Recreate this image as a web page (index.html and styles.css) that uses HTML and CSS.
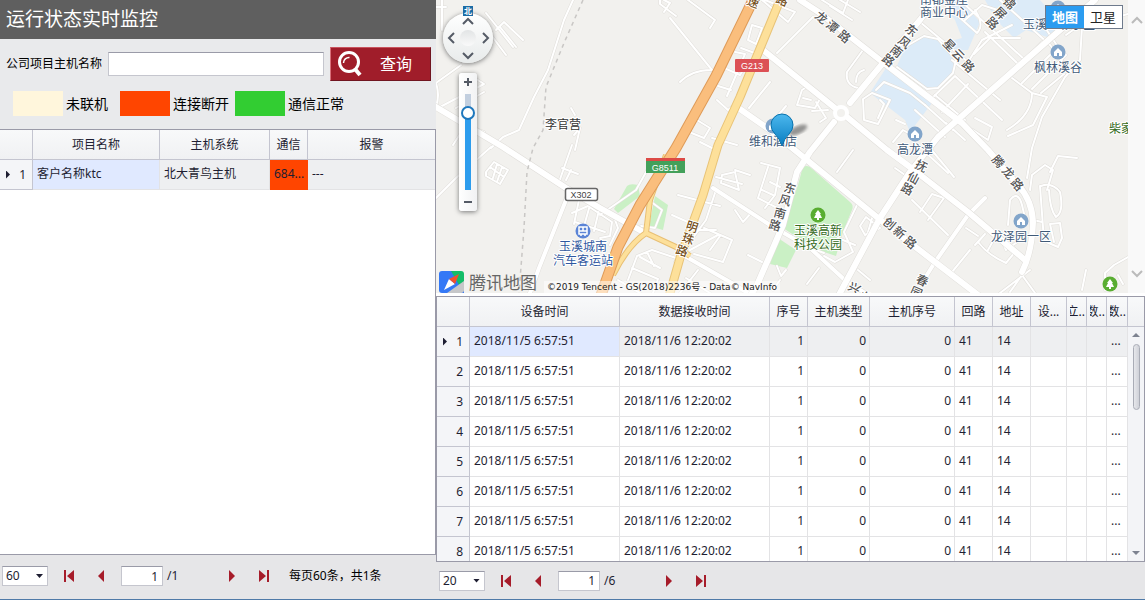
FILE: index.html
```html
<!DOCTYPE html>
<html lang="zh-CN">
<head>
<meta charset="utf-8">
<meta name="viewport" content="width=device-width, initial-scale=1">
<title>运行状态实时监控</title>
<link rel="stylesheet" href="styles.css">
</head>
<body>
<svg class="defs" aria-hidden="true">
  <defs>
    <symbol id="first" viewBox="0 0 12 14"><path d="M1 1h2v12H1zM11 1v12L4 7z" fill="#a61c2a"/></symbol>
    <symbol id="prev" viewBox="0 0 12 14"><path d="M9 1v12L3 7z" fill="#a61c2a"/></symbol>
    <symbol id="next" viewBox="0 0 12 14"><path d="M3 1v12l6-6z" fill="#a61c2a"/></symbol>
    <symbol id="last" viewBox="0 0 12 14"><path d="M9 1h2v12H9zM1 1v12l7-6z" fill="#a61c2a"/></symbol>
  </defs>
</svg>
<main class="app">
  <section class="side">
    <h1 class="title">运行状态实时监控</h1>
    <form class="search">
      <label for="host">公司项目主机名称</label>
      <input id="host" class="field" type="text">
      <button class="query" type="button">
        <svg width="24" height="26" viewBox="0 0 24 26" fill="none" stroke="#fff" aria-hidden="true">
          <circle cx="11" cy="11" r="9.500" stroke-width="3"/>
          <path d="M17 18l5 6" stroke-width="4"/>
          <path d="M5.500 12a5.500 5.500 0 0 1 6-5.500" stroke-width="1.500"/>
        </svg>
        <span>查询</span>
      </button>
    </form>
    <ul class="legend">
      <li><i class="swatch offline"></i>未联机</li>
      <li><i class="swatch broken"></i>连接断开</li>
      <li><i class="swatch normal"></i>通信正常</li>
    </ul>
    <div class="grid hosts">
      <table>
        <colgroup><col class="w33"><col class="w127"><col class="w110"><col class="w38"><col></colgroup>
        <thead><tr><th></th><th>项目名称</th><th>主机系统</th><th>通信</th><th>报警</th></tr></thead>
        <tbody><tr class="current"><th><i class="marker"></i>1</th><td class="focus">客户名称ktc</td><td>北大青鸟主机</td><td class="alarm">684...</td><td>---</td></tr></tbody>
      </table>
    </div>
    <nav class="pager pager-side" aria-label="主机分页">
      <span class="pick"><select aria-label="每页条数"><option>60</option></select></span>
      <button class="step" type="button" aria-label="首页"><svg width="12" height="14"><use href="#first"/></svg></button>
      <button class="step" type="button" aria-label="上一页"><svg width="12" height="14"><use href="#prev"/></svg></button>
      <input class="page" type="text" value="1" aria-label="页码">
      <span class="total">/1</span>
      <button class="step" type="button" aria-label="下一页"><svg width="12" height="14"><use href="#next"/></svg></button>
      <button class="step" type="button" aria-label="末页"><svg width="12" height="14"><use href="#last"/></svg></button>
      <span class="summary">每页60条，共1条</span>
    </nav>
  </section>

  <section class="main">
    <div class="map-row">
      <div class="map">
        <svg class="canvas" viewBox="436 0 692 293" preserveAspectRatio="xMinYMin slice" role="img" aria-label="玉溪地图">
          <defs>
            <g id="minor" fill="none" stroke-linejoin="round" stroke-linecap="round">
              <path d="M436 83L461 65M442 0V30M436 7H446M486 13L513 47M482 23L506 55M496 30L504 22L523 40M500 27L516 47"/>
              <path d="M436 83Q440 95 436 107M440 107L484 84M456 108L484 92M470 75L484 84M453 145L466 125L484 132"/>
              <path d="M486 172L494 162L508 170L500 184L486 176ZM490 167L504 177M497 164L493 178M502 167L497 182"/>
              <path d="M436 198L456 178L491 147M573 0L564 20L548 70L534 97L519 130L503 137L491 148"/>
              <path d="M571 108L575 115M575 150L580 128L574 135M580 128L572 122M558 185L572 145M562 168L578 174M566 180L571 170"/>
              <path d="M660 0V4L676 16M664 0L670 3L664 12"/>
              <path d="M572 213L588 206L612 222L610 236L600 238M575 222L605 232M580 195L574 224M592 198L584 226M600 206L594 231M614 217L618 228L610 245"/>
              <path d="M670 18L712 70M680 82Q692 70 711 70M688 0L715 20L710 28M765 0L795 12L788 22L762 0M752 25L762 28L756 44L748 40ZM741 48L760 55M735 52L745 54L727 96M718 86L731 90M724 68L740 75M740 75L748 62M717 100L728 110L738 102"/>
              <path d="M692 117L710 128L704 138L689 132ZM700 142L712 148M712 138L737 145M770 82L749 108M786 106L776 118"/>
              <path d="M822 0L843 13L848 0M830 6L852 20M840 0L860 12M800 0L820 13M813 17L777 53"/>
              <path d="M808 86L821 97L815 108L797 105L802 90ZM803 98L811 100M812 111L828 110M816 102L826 118L820 122M863 50L847 72Q845 85 858 88M864 70Q856 72 856 82"/>
              <path d="M863 99L872 93L890 100L878 124L864 120ZM880 100L884 104L878 118M893 142L903 130L910 134M896 120L905 124"/>
              <path d="M920 22L968 62L982 40L1012 25M930 100L955 76L1002 120M942 112L968 84M952 60L1000 100M960 0L1025 60L1042 42M985 32L1018 64M965 20L982 5L1004 12M940 0L977 33Q985 25 975 10M1000 0L1050 45L1062 60M974 54L990 38L1020 38"/>
              <path d="M905 47L924 36L938 39L956 60L953 73L938 88L927 89L897 67M876 90L884 82L910 93L925 105"/>
              <path d="M1012 78L1032 93L1047 97L1033 125L1008 136M1032 93Q1032 115 1007 130M1022 83L1050 55M1032 89L1066 55M1041 93L1064 74M1082 27L1080 60L1065 77L1042 117L1032 148L1027 178M1066 35L1090 18M1040 20L1060 50M1082 27L1128 14"/>
              <path d="M915 110L945 137M925 105L953 130M935 95L965 120M946 123L965 140M975 118L992 127L988 140L973 130"/>
              <path d="M912 200L948 235M920 212L932 194L944 198L928 220M930 148L954 177M925 152L948 173M895 168L915 182"/>
              <path d="M1030 190L1032 175L1045 165L1053 170M1050 172L1058 156L1077 158M1053 170L1047 190M1040 186L1044 241L1058 247L1062 238L1060 223L1050 224L1054 242M1041 186Q1052 182 1060 192Q1064 212 1056 217Q1050 210 1049 190M1033 220L1042 222"/>
              <path d="M975 245L985 234L978 242Q988 255 1006 263L1015 252M998 232L1006 250L1020 240M988 250L998 232M952 272L970 250M1008 225L1010 200Q1018 190 1022 205L1025 218M966 228L978 236"/>
              <path d="M1010 292L1022 275L1035 293M1082 290L1086 270M1105 290V273L1114 265L1128 257M1118 275L1123 284M1000 293L1030 270"/>
              <path d="M761 163L780 168L775 195L765 208M768 167L758 198L785 212M770 182L780 187M762 190L773 195M722 175L735 172L739 190L721 183ZM735 170L750 175M716 177L742 184M678 195L720 206M716 190L706 220L675 262M693 220L698 230L716 230M704 228L732 240L723 262L694 254M690 250L718 235M710 250L720 236M748 255L762 262M672 215L690 223L682 240"/>
              <path d="M628 280L637 256L652 250L676 258M632 268L658 279L653 293M640 257L660 268M647 252L654 266M618 280L640 293M686 278L710 293M698 270L680 293M735 210L743 222L752 212M777 266L781 276L786 270M780 280L773 290M807 284L819 268"/>
              <path d="M858 203L844 232L853 252L835 262L824 256M866 217L880 228L865 235L860 226ZM873 215L868 232M838 238L855 245M837 172L853 150M824 253L810 248M858 270L870 280"/>
              <path d="M600 215L636 190L650 165M646 198L662 210L655 228L641 226"/>
            </g>
            <g id="major" fill="none" stroke-linejoin="round" stroke-linecap="round">
              <path d="M436 107L503 147L566 188L600 208L645 233"/>
              <path d="M763 50L835 108M847 117L887 150L910 167L968 212L1025 260"/>
              <path d="M935 0L920 20L883 63L850 103M834 122L810 152L797 172L783 225L757 285L752 293"/>
              <path d="M800 0L820 13L880 60L910 83L962 123L988 150L1018 185Q1032 200 1033 222Q1032 252 1022 272"/>
              <path d="M1095 0L1052 37L938 137L910 172L880 218L840 293"/>
              <path d="M737 107L770 130L807 160L883 222L935 262L978 295"/>
            </g>
            <g id="medium" fill="none" stroke-linejoin="round" stroke-linecap="round">
              <path d="M568 195L539 268L530 293M713 188L770 225L810 248L847 282L865 293M683 255L730 282L748 293M925 278L935 262L968 215L985 198"/>
            </g>
            <linearGradient id="pinfill" x1="0" y1="0" x2="0" y2="1"><stop offset="0" stop-color="#4cb8ee"/><stop offset="1" stop-color="#087cc0"/></linearGradient>
            <filter id="haze"><feGaussianBlur stdDeviation="1.500"/></filter>
            <g id="house"><circle r="7.500" fill="#82a5ca"/><path d="M-4 0L0-4L4 0V4H1V1H-1V4H-4Z" fill="#fff"/></g>
            <g id="tree"><circle r="7.500" fill="#59ad31"/><path d="M0-5L3-1H2L4 3H1V5H-1V3H-4L-2-1H-3Z" fill="#fff"/></g>
          </defs>
          <rect x="436" width="692" height="293" fill="#f2f1ee"/>
          <g fill="#dcebf8">
            <path d="M905 48L924 37L938 40L955 60L953 72L938 87L927 88L896 68Z"/>
            <path d="M870 93L886 68L912 85L932 103L910 132L905 120Z"/>
            <path d="M940 0H960L980 22L968 50L955 50L948 42L962 38L955 20Z"/>
            <path d="M985 0H1040L1062 25L1050 38L1026 30L1014 38L996 20Z"/>
          </g>
          <g fill="#caf0c5">
            <path d="M802 170Q804 164 810 167L850 202Q854 205 852 210L843 232L836 256L815 249L783 228L798 185Z"/>
            <path d="M778 238L796 250L787 268L770 264Z"/>
            <path d="M627 186Q630 183 638 185L640 196L618 213L614 209Z"/>
            <path d="M655 196L668 205L663 230L649 226Z"/>
          </g>
          <use href="#minor" stroke="#e0deda" stroke-width="3"/><use href="#minor" stroke="#fff" stroke-width="2"/>
          <use href="#medium" stroke="#e0deda" stroke-width="5"/><use href="#medium" stroke="#fff" stroke-width="4"/>
          <use href="#major" stroke="#e0deda" stroke-width="7"/><use href="#major" stroke="#fff" stroke-width="6"/>
          <circle cx="841" cy="113" r="6" fill="#f2f1ee" stroke="#fff" stroke-width="4"/>
          <path d="M583 0L564 43L546 87L543 130L533 148L527 172L524 228L519 293" fill="none" stroke="#c9c7c5" stroke-width="1.500" stroke-dasharray="4 4"/>
          <g fill="none" stroke-linejoin="round">
            <path d="M666 155L650 200L646 233L676 247L690 256M646 233Q628 245 613 275" stroke="#e8bf74" stroke-width="6"/>
            <path d="M666 155L650 200L646 233L676 247L690 256M646 233Q628 245 613 275" stroke="#fde09a" stroke-width="4"/>
            <path d="M780 0L740 97L718 145L703 195L680 258L668 300" stroke="#e8c377" stroke-width="9"/>
            <path d="M780 0L740 97L718 145L703 195L680 258L668 300" stroke="#fde09a" stroke-width="7"/>
            <path d="M754 -2L716 76L676 148L640 205L618 247L600 298" stroke="#df9b58" stroke-width="11"/>
            <path d="M754 -2L716 76L676 148L640 205L618 247L600 298" stroke="#fabe7d" stroke-width="9"/>
          </g>
          <rect x="735" y="59" width="34" height="13" rx="1" fill="#dc5055"/><text class="shield" x="752" y="69">G213</text>
          <rect x="646" y="158" width="39" height="3" fill="#dc4a45"/><rect x="646" y="161" width="39" height="12" fill="#43a05a"/><text class="shield" x="665" y="171">G8511</text>
          <rect x="565.500" y="188.500" width="32" height="12" rx="2" fill="#fff" stroke="#666" stroke-width="1.500"/><text class="shield dark" x="581" y="198">X302</text>
          <g class="label">
            <text x="563" y="129" fill="#333">李官营</text>
            <text x="773" y="146">维和酒店</text>
            <text x="915" y="154">高龙潭</text>
            <text x="944" y="4">南都金座</text><text x="944" y="17">商业中心</text>
            <text x="1058" y="72">枫林溪谷</text>
            <text x="1059" y="29">玉溪五彩小区</text>
            <text x="1021" y="241">龙泽园一区</text>
            <text x="583" y="251" fill="#3058a0">玉溪城南</text><text x="583" y="265" fill="#3058a0">汽车客运站</text>
            <text x="818" y="235" fill="#346b22">玉溪高新</text><text x="818" y="249" fill="#346b22">科技公园</text>
            <text x="1127" y="133" fill="#346b22">柴家村</text>
          </g>
          <g class="road">
            <text x="814 825 837" y="17 26 36" rotate="40">龙潭路</text>
            <text x="783 778 773 768" y="191 203 216 228" rotate="15">东风南路</text>
            <text x="685 681 675" y="229 241 253" rotate="18" fill="#765122">明珠路</text>
            <text x="882 892 903" y="223 232 242" rotate="40">创新路</text>
            <text x="991 1001 1010" y="160 171 183" rotate="48">腾龙路</text>
            <text x="914 906 900" y="167 179 190" rotate="28">抚仙路</text>
            <text x="904 897 889 881" y="30 42 51 60" rotate="38">东风南路</text>
            <text x="942 951 961" y="44 54 65" rotate="45">星云路</text>
            <text x="1002 993 985" y="2 12 22" rotate="45">锦屏路</text>
            <text x="915 909" y="282 294" rotate="24">春园</text>
            <text x="847 858" y="289 298" rotate="30">兴业</text>
            <text x="746 775" y="4 2" rotate="22" fill="#765122">速路</text>
          </g>
          <use href="#house" x="1058" y="52"/><use href="#house" x="1058" y="8"/><use href="#house" x="915" y="134"/><use href="#house" x="1021" y="221"/><use href="#house" x="773" y="126"/>
          <use href="#tree" x="818" y="215"/><use href="#tree" x="1110" y="284"/>
          <circle cx="583" cy="231" r="7.500" fill="#5b84d6"/><path d="M579 227h8v7h-8zM583 227v4M579 231h8M581 234v2M585 234v2" fill="none" stroke="#fff" stroke-width="1.500"/>
          <ellipse cx="798" cy="130" rx="10" ry="4" transform="rotate(-25 798 130)" fill="#555" opacity=".6" filter="url(#haze)"/>
          <path d="M782 146Q780 139 775 134Q771 130 771 125A11 11 0 0 1 793 125Q793 130 789 134Q784 139 782 146Z" fill="url(#pinfill)" stroke="#0872ad"/>
        </svg>

        <div class="controls">
          <span class="north">北</span>
          <div class="pan">
            <button class="up" type="button" aria-label="向上"><svg width="14" height="8" viewBox="0 0 14 8"><path d="M2 7L7 2L12 7"/></svg></button>
            <button class="left" type="button" aria-label="向左"><svg width="8" height="14" viewBox="0 0 8 14"><path d="M7 2L2 7L7 12"/></svg></button>
            <span class="hub"></span>
            <button class="right" type="button" aria-label="向右"><svg width="8" height="14" viewBox="0 0 8 14"><path d="M1 2L6 7L1 12"/></svg></button>
            <button class="down" type="button" aria-label="向下"><svg width="14" height="8" viewBox="0 0 14 8"><path d="M2 1L7 6L12 1"/></svg></button>
          </div>
          <div class="zoom">
            <button type="button" aria-label="放大"><svg width="10" height="10" viewBox="0 0 10 10"><path d="M1 5H9M5 1V9"/></svg></button>
            <input type="range" min="0" max="100" value="84" aria-label="缩放级别">
            <button type="button" aria-label="缩小"><svg width="10" height="10" viewBox="0 0 10 10"><path d="M1 5H9"/></svg></button>
          </div>
        </div>
        <div class="kinds"><button class="on" type="button">地图</button><button type="button">卫星</button></div>
        <div class="credit">
          <svg width="25" height="22" viewBox="0 0 25 22" aria-hidden="true">
            <path d="M3 0H14L25 11V22H3Q0 22 0 19V3Q0 0 3 0Z" fill="#3478f6"/>
            <path d="M12 0H22Q25 0 25 3V14H20Z" fill="#13bd68"/>
            <path d="M8 22L25 10V19Q25 22 22 22Z" fill="#c6c7c9"/>
            <path d="M5 19L10 8L16 13Z" fill="#fff"/><path d="M10 8L20 3L16 13Z" fill="#f2502d"/>
          </svg>
          <span class="brand">腾讯地图</span>
          <span class="copy">©2019 Tencent - GS(2018)2236号 - Data© NavInfo</span>
        </div>
      </div>
      <div class="map-scroll" aria-hidden="true">
        <svg width="12" height="8" viewBox="0 0 12 8"><path d="M1 7L6 2L11 7"/></svg>
        <svg width="12" height="8" viewBox="0 0 12 8"><path d="M1 1L6 6L11 1"/></svg>
      </div>
    </div>

    <div class="grid records">
      <table>
        <colgroup><col class="w33"><col class="w150"><col class="w150"><col class="w38"><col class="w62"><col><col class="w38"><col class="w38"><col class="w36"><col class="w20"><col class="w20"><col class="w21"><col class="w16"></colgroup>
        <thead><tr><th></th><th>设备时间</th><th>数据接收时间</th><th>序号</th><th>主机类型</th><th>主机序号</th><th>回路</th><th>地址</th><th>设...</th><th class="narrow"><span class="cut">立..</span></th><th class="narrow"><span class="cut">数..</span></th><th class="narrow"><span class="cut">数..</span></th><th></th></tr></thead>
        <tbody>
          <tr class="current"><th><i class="marker"></i>1</th><td class="focus">2018/11/5 6:57:51</td><td>2018/11/6 12:20:02</td><td class="num">1</td><td class="num">0</td><td class="num">0</td><td>41</td><td>14</td><td></td><td></td><td></td><td>...</td><td></td></tr>
          <tr><th>2</th><td>2018/11/5 6:57:51</td><td>2018/11/6 12:20:02</td><td class="num">1</td><td class="num">0</td><td class="num">0</td><td>41</td><td>14</td><td></td><td></td><td></td><td>...</td><td></td></tr>
          <tr><th>3</th><td>2018/11/5 6:57:51</td><td>2018/11/6 12:20:02</td><td class="num">1</td><td class="num">0</td><td class="num">0</td><td>41</td><td>14</td><td></td><td></td><td></td><td>...</td><td></td></tr>
          <tr><th>4</th><td>2018/11/5 6:57:51</td><td>2018/11/6 12:20:02</td><td class="num">1</td><td class="num">0</td><td class="num">0</td><td>41</td><td>14</td><td></td><td></td><td></td><td>...</td><td></td></tr>
          <tr><th>5</th><td>2018/11/5 6:57:51</td><td>2018/11/6 12:20:02</td><td class="num">1</td><td class="num">0</td><td class="num">0</td><td>41</td><td>14</td><td></td><td></td><td></td><td>...</td><td></td></tr>
          <tr><th>6</th><td>2018/11/5 6:57:51</td><td>2018/11/6 12:20:02</td><td class="num">1</td><td class="num">0</td><td class="num">0</td><td>41</td><td>14</td><td></td><td></td><td></td><td>...</td><td></td></tr>
          <tr><th>7</th><td>2018/11/5 6:57:51</td><td>2018/11/6 12:20:02</td><td class="num">1</td><td class="num">0</td><td class="num">0</td><td>41</td><td>14</td><td></td><td></td><td></td><td>...</td><td></td></tr>
          <tr><th>8</th><td>2018/11/5 6:57:51</td><td>2018/11/6 12:20:02</td><td class="num">1</td><td class="num">0</td><td class="num">0</td><td>41</td><td>14</td><td></td><td></td><td></td><td>...</td><td></td></tr>
        </tbody>
      </table>
      <div class="scrollbar" aria-hidden="true">
        <svg width="8" height="4" viewBox="0 0 8 4"><path d="M4 0L8 4H0Z" fill="#7d8290"/></svg>
        <span class="thumb"></span>
        <svg width="8" height="4" viewBox="0 0 8 4"><path d="M0 0H8L4 4Z" fill="#7d8290"/></svg>
      </div>
    </div>
    <nav class="pager" aria-label="记录分页">
      <span class="pick"><select aria-label="每页条数"><option>20</option></select></span>
      <button class="step" type="button" aria-label="首页"><svg width="12" height="14"><use href="#first"/></svg></button>
      <button class="step" type="button" aria-label="上一页"><svg width="12" height="14"><use href="#prev"/></svg></button>
      <input class="page" type="text" value="1" aria-label="页码">
      <span class="total">/6</span>
      <button class="step" type="button" aria-label="下一页"><svg width="12" height="14"><use href="#next"/></svg></button>
      <button class="step" type="button" aria-label="末页"><svg width="12" height="14"><use href="#last"/></svg></button>
    </nav>
  </section>
</main>
</body>
</html>
```
FILE: styles.css
```css
* { box-sizing: border-box; }
body {
  margin: 0;
  font: 12px/18px "Noto Sans", "Noto Sans CJK SC", sans-serif;
  color: #000;
  background: #e6e6e8;
}
button, input, select { font: inherit; color: inherit; margin: 0; padding: 0; border-radius: 0; }
button { border: 0; background: none; display: flex; align-items: center; justify-content: center; }
.defs { position: absolute; width: 0; height: 0; }
.app {
  display: grid;
  grid-template-columns: 436fr 709fr;
  height: 100vh;
  border-bottom: 1px solid #4f7aa8;
}
.side, .main { display: flex; flex-direction: column; min-width: 0; min-height: 0; }

/* search panel */
.title { margin: 0; padding: 0 6px; font-size: 19px; line-height: 39px; font-weight: 400; color: #fff; background: #5f5f5f; }
.search { display: flex; align-items: center; gap: 6px; padding: 8px 5px 0 6px; background: #e9eaec; }
.field { flex: 1; min-width: 0; height: 24px; padding: 0 4px; border: 1px solid #c5c6ce; border-top-color: #9a9ba8; background: #fff; }
.query {
  width: 101px;
  height: 34px;
  padding-left: 7px;
  justify-content: flex-start;
  gap: 18px;
  font-size: 16px;
  color: #fff;
  background: #a01d2a;
  border: 1px solid #701520;
  border-top-color: #c8535e;
  border-left-color: #d9707a;
}
.legend { display: flex; gap: 12px; margin: 0; padding: 10px 13px 13px; list-style: none; font-size: 14px; background: #e9eaec; }
.legend li { display: flex; align-items: center; gap: 3px; }
.legend li:last-child { margin-left: -6px; }
.swatch { width: 50px; height: 25px; }
.offline { background: #fff6dc; }
.broken { background: #ff4500; }
.normal { background: #32cd32; }

/* data grids */
.grid { flex: 1 1 0; min-height: 0; position: relative; overflow: hidden; background: #fff; border: 1px solid #9a9aa8; }
.hosts { border-left: 0; }
.grid table { width: 100%; table-layout: fixed; border-collapse: separate; border-spacing: 0; color: #1e1e32; }
.grid th, .grid td { height: 30px; padding: 0 4px; border: solid #e3e3e5; border-width: 0 1px 1px 0; font-weight: 400; text-align: left; white-space: nowrap; overflow: hidden; }
.grid thead th { text-align: center; border-color: #c4c5d0; background: linear-gradient(#f8f9fa, #f0f1f3); }
.grid tbody th { padding-right: 6px; text-align: right; border-color: #c4c5d0; background: #f4f5f8; }
.grid tr > :last-child { border-right: 0; }
.grid tbody td { padding-bottom: 2px; }
.grid .num { text-align: right; padding-right: 3px; }
.grid .narrow { padding: 0 1px 0 3px; }
.grid .current td { background: #eeeff1; }
.grid .current .focus { background: #e0e9ff; }
.grid .current .alarm { background: #ff4500; border-color: #ff4500; }
.marker { float: left; width: 4px; height: 8px; margin: 5px 0 0 2px; background: #1e1e32; clip-path: polygon(0 0, 100% 50%, 0 100%); }
.cut { display: flex; justify-content: flex-end; overflow: hidden; }
.w16 { width: 16px; }
.w20 { width: 20px; }
.w21 { width: 21px; }
.w33 { width: 33px; }
.w36 { width: 36px; }
.w38 { width: 38px; }
.w62 { width: 62px; }
.w110 { width: 110px; }
.w127 { width: 127px; }
.w150 { width: 150px; }
.scrollbar { position: absolute; top: 30px; right: 0; bottom: 0; width: 16px; padding: 6px 0; display: flex; flex-direction: column; align-items: center; background: #f3f4f7; }
.thumb { width: 7px; height: 66px; margin: 7px 0 auto; border: 1px solid #a9acb6; border-radius: 4px; background: linear-gradient(90deg, #e6e7eb, #cfd1d8); }

/* pagers */
.pager { display: flex; align-items: center; padding: 8px 3px; height: 37px; color: #1e1e32; }
.pager-side { height: 44px; padding: 10px 2px 12px; }
.pick { position: relative; }
.pick::after { content: ""; position: absolute; right: 5px; top: 8px; width: 7px; height: 4px; background: #1e1e32; clip-path: polygon(0 0, 100% 0, 50% 100%); pointer-events: none; }
.pick select { display: block; width: 46px; height: 20px; padding-left: 3px; appearance: none; border: 1px solid #c5c6ce; border-top-color: #9a9ba8; background: #fff; }
.step { width: 22px; height: 20px; margin-left: 10px; }
.page { width: 42px; height: 20px; margin-left: 9px; padding: 0 4px; text-align: right; border: 1px solid #c5c6ce; border-top-color: #9a9ba8; background: #fff; }
.total { width: 44px; margin-left: 4px; }
.summary { margin-left: 14px; color: #000; }

/* map */
.map-row { display: flex; flex: none; height: 296px; padding-bottom: 3px; background: #fff; }
.map { flex: 1; min-width: 0; position: relative; overflow: hidden; background: #f2f1ee; }
.canvas { display: block; width: 100%; height: 100%; font-family: "Noto Sans CJK SC", sans-serif; }
.label { font-size: 12px; text-anchor: middle; fill: #3f5a78; stroke: #fff; stroke-width: 2px; stroke-linejoin: round; paint-order: stroke; }
.road { font-size: 12px; font-weight: 500; fill: #555; stroke: #fff; stroke-width: 2px; stroke-linejoin: round; paint-order: stroke; }
.shield { font: 9px "Liberation Sans", sans-serif; text-anchor: middle; fill: #fff; }
.shield.dark { fill: #444; }
.controls { position: absolute; left: 7px; top: 6px; display: flex; flex-direction: column; align-items: center; }
.controls path { fill: none; stroke: #555b66; stroke-width: 2; }
.north { z-index: 1; width: 10px; height: 10px; font-size: 8px; line-height: 10px; font-weight: 700; text-align: center; color: #fff; background: #1b6ba5; }
.pan {
  display: grid;
  grid-template: 15px 20px 15px / 15px 20px 15px;
  place-items: center;
  width: 50px;
  height: 50px;
  margin-top: -3px;
  border-radius: 50%;
  background: linear-gradient(#fff, #e8ebeb);
  box-shadow: 0 1px 5px #777;
}
.up, .down { grid-column: 2; }
.left { grid-area: 2 / 1; }
.hub { grid-area: 2 / 2; width: 16px; height: 16px; border-radius: 50%; background: linear-gradient(#e2e4e5, #fafafa); }
.right { grid-area: 2 / 3; }
.zoom { display: flex; flex-direction: column; align-items: center; justify-content: space-between; width: 18px; height: 138px; margin-top: 10px; padding: 4px 0; border-radius: 3px; background: linear-gradient(90deg, #fff, #f1f2f3); box-shadow: 0 1px 5px #777; }
.zoom input { appearance: none; writing-mode: vertical-lr; direction: rtl; width: 16px; height: 98px; background: linear-gradient(#c2cfdf 20px, #2c9ced 20px) center / 6px 96px no-repeat; }
.zoom input::-webkit-slider-thumb { appearance: none; width: 14px; height: 14px; border: 2px solid #1f78bd; border-radius: 50%; background: #fff; }
.kinds { position: absolute; right: 5px; top: 5px; display: flex; border: 1px solid #6e7a8c; background: #fff; }
.kinds button { width: 38px; height: 22px; font-size: 13px; color: #222; }
.kinds .on { color: #fff; font-weight: 700; background: #2b9cf0; }
.credit { position: absolute; left: 3px; bottom: 0; display: flex; align-items: flex-end; }
.brand { margin-left: 5px; font-size: 17px; line-height: 20px; color: #666; }
.copy { margin-left: 7px; padding: 0 3px; font: 9px/12px "DejaVu Sans", "Noto Sans CJK SC", sans-serif; color: #222; background: rgb(255 255 255 / 50%); }
.map-scroll { width: 17px; display: flex; flex-direction: column; align-items: center; justify-content: space-between; padding: 16px 0 15px; background: #f9f9f9; }
.map-scroll path { fill: none; stroke: #bbb; stroke-width: 2; }
```
